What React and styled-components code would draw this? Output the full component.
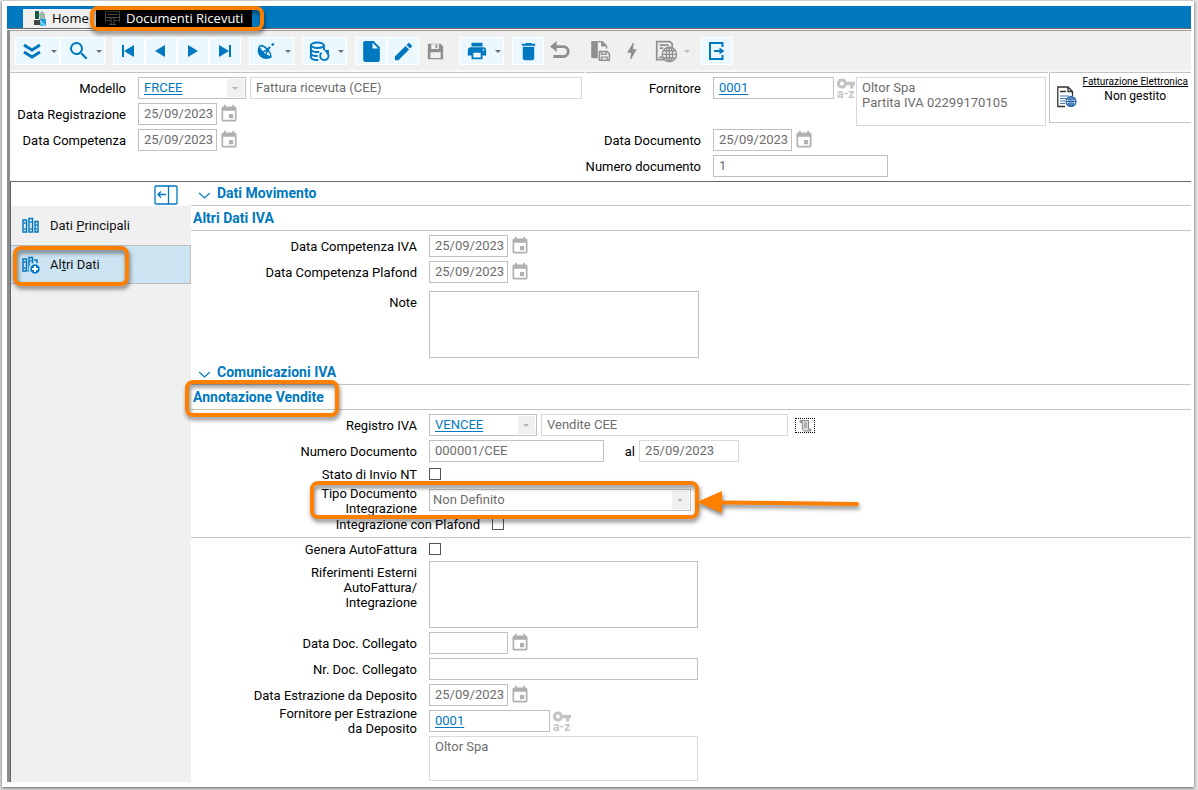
import React, { useState } from "react";
import styled, { createGlobalStyle, css } from "styled-components";
import { MdEvent, MdPrint, MdDelete, MdEdit, MdInsertDriveFile, MdSearch, MdBolt } from "react-icons/md";

const blue = "#0078bf";
const orange = "#ff8000";
const line = "#c3c3c3";

const GlobalStyle = createGlobalStyle`
  *, *::before, *::after { box-sizing: border-box; }
  body { margin: 0; background: #e2e2e2; font: 13px/15px Roboto, "Liberation Sans", sans-serif; color: #000; }
  button, input, select, textarea { font: inherit; color: inherit; margin: 0; }
  button { border: 0; padding: 0; background: none; cursor: pointer; }
  svg { display: block; }
`;

const Page = styled.div`
  min-height: 100vh;
  display: flex;
  padding: 1px 4px 3px 2px;
`;

const Card = styled.div`
  flex: 1;
  min-width: 0;
  display: flex;
  flex-direction: column;
  background: #fff;
  padding: 5px 3px 5px 5px;
  box-shadow: 0 1px 3px rgba(0, 0, 0, 0.6);
`;

const TabBar = styled.nav`
  display: flex;
  height: 23px;
  padding-left: 16px;
  background: ${blue};
  border-bottom: 1px solid #6a6468;
`;

const Tab = styled.button`
  position: relative;
  display: flex;
  align-items: center;
  gap: ${(p) => (p.$active ? "6px" : "5px")};
  height: ${(p) => (p.$active ? "18px" : "19px")};
  margin-top: 3px;
  padding: ${(p) => (p.$active ? "0 8px 0 9px" : "0 4px 0 10px")};
  width: ${(p) => (p.$active ? "156px" : "73px")};
  background: ${(p) => (p.$active ? "#000" : "#f0f0f0")};
  color: ${(p) => (p.$active ? "#fff" : "#000")};
  font-family: "Open Sans", "Noto Sans", sans-serif;
  white-space: nowrap;
`;

const Highlight = styled.span`
  position: absolute;
  z-index: 2;
  left: ${(p) => p.$x}px;
  top: ${(p) => p.$y}px;
  width: ${(p) => p.$w}px;
  height: ${(p) => p.$h}px;
  border: 4px solid ${orange};
  border-radius: 8px;
  filter: drop-shadow(1px 3px 2px rgba(0, 0, 0, 0.5));
  pointer-events: none;
`;

const Arrow = styled.svg`
  position: absolute;
  z-index: 2;
  left: 505px;
  top: 2px;
  filter: drop-shadow(1px 3px 2px rgba(0, 0, 0, 0.5));
  pointer-events: none;
`;

const Workspace = styled.div`
  flex: 1;
  display: flex;
  flex-direction: column;
  margin-top: 1px;
  border-left: 3px solid #8c8c8c;
`;

const Toolbar = styled.div`
  display: flex;
  gap: 8px;
  height: 42px;
  padding: 6px 5px;
  background: #f0f0f0;
  border-top: 1px solid #a09a9c;
  box-shadow: inset 0 -2px 0 #f8f8f8;
`;

const ToolGroup = styled.div`
  display: flex;
`;

const ToolButton = styled.button`
  display: flex;
  align-items: center;
  justify-content: ${(p) => (p.$menu ? "space-between" : "center")};
  width: ${(p) => (p.$menu ? "45px" : "32px")};
  height: 28px;
  padding: ${(p) => (p.$menu ? "0 2px 0 6px" : "0")};
  border: 1px solid ${(p) => (p.$off ? "transparent" : "#fff")};
  background: ${(p) => (p.$off ? "transparent" : "#ebf8ff")};
  color: ${(p) => (p.$off ? "#8f8f8f" : blue)};
`;

const Caret = styled.span`
  border: 3px solid transparent;
  border-top-color: ${(p) => (p.$off ? "#b8b8b8" : "#6f6f6f")};
  border-bottom: 0;
`;

const Header = styled.div`
  display: flex;
  align-items: flex-start;
  gap: 1px;
`;

const HeaderPane = styled.div`
  display: flex;
  flex-direction: column;
  gap: 4px;
  padding: 4px 2px 4px 0;
  border-top: 1px solid ${line};
  flex: ${(p) => (p.$grow ? "1 1 0" : "0 0 463px")};
  min-width: 0;
`;

const Invoice = styled.div`
  flex: 0 0 142px;
  display: flex;
  align-items: flex-start;
  justify-content: space-between;
  height: 51px;
  padding: 1px 3px 0 7px;
  border: 1px solid ${line};
  border-right: 0;
  > svg { margin-top: 12px; }
`;

const InvoiceText = styled.div`
  text-align: center;
  font-size: 12px;
  a { display: block; font-size: 10px; color: #000; }
`;

const Row = styled.div`
  position: relative;
  display: flex;
  align-items: ${(p) => (p.$top ? "flex-start" : "center")};
  height: ${(p) => p.$h || 22}px;
  margin-top: ${(p) => p.$space || 0}px;
`;

const Label = styled.label`
  flex: none;
  width: ${(p) => p.$w || 226}px;
  margin-right: ${(p) => (p.$w === 31 ? 4 : 12)}px;
  padding-top: ${(p) => p.$pad || 0}px;
  text-align: right;
  white-space: pre-line;
`;

const box = css`
  flex: ${(p) => (p.$w ? "none" : "1")};
  width: ${(p) => (p.$w ? p.$w + "px" : "auto")};
  min-width: 0;
  height: ${(p) => p.$h || 22}px;
  padding: 0 2px 0 5px;
  margin-left: ${(p) => p.$gap || 0}px;
  border: 1px solid ${(p) => (p.$soft ? "#d9d9d9" : "#c0c0c0")};
  border-radius: 0;
  background: #fff;
  color: ${(p) => (p.$link ? blue : "#6d6d6d")};
  text-decoration: ${(p) => (p.$link ? "underline" : "none")};
  text-underline-offset: 2px;
  outline: 0;
`;

const Input = styled.input`
  ${box}
  padding-bottom: 1px;
`;

const Area = styled.textarea`
  ${box}
  display: block;
  padding-top: 2px;
  resize: none;
`;

const SelectWrap = styled.span`
  position: relative;
  flex: none;
  display: flex;
  width: ${(p) => p.$w}px;
  &::before {
    content: "";
    position: absolute;
    right: 2px;
    top: 2px;
    width: 17px;
    height: 18px;
    background: #f0f0f0;
    pointer-events: none;
  }
  &::after {
    content: "";
    position: absolute;
    right: 8px;
    top: 10px;
    border: 3px solid transparent;
    border-top-color: #b5b5b5;
    border-bottom: 0;
    pointer-events: none;
  }
`;

const SelectBox = styled.select`
  ${box}
  appearance: none;
  padding: 0 20px 1px ${(p) => (p.$link ? 5 : 3)}px;
`;

const SelectSlot = styled.div`
  display: flex;
  padding-top: 3px;
`;

const Check = styled.input.attrs({ type: "checkbox" })`
  appearance: none;
  width: 12px;
  height: 12px;
  border: 1px solid #555;
  background: #fff;
  &:checked { background: ${blue}; }
`;

const IconButton = styled.button`
  flex: none;
  width: 20px;
  height: 20px;
  margin-left: 2px;
  color: #b0b0b0;
`;

const KeyButton = styled.button`
  flex: none;
  width: 22px;
  height: 22px;
  padding-left: 3px;
  color: #c4c4c4;
  font-size: 12px;
  font-weight: 700;
  line-height: 10px;
  text-align: left;
`;

const ScrollButton = styled.button`
  width: 20px;
  height: 15px;
  margin-left: 7px;
  border: 1px dotted #000;
  display: flex;
  justify-content: center;
  align-items: center;
`;

const Body = styled.div`
  flex: 1;
  display: flex;
  border-top: 1px solid #666;
  border-left: 1px solid #666;
`;

const Sidebar = styled.aside`
  flex: 0 0 180px;
  background: #f0f0f0;
`;

const SidebarTop = styled.div`
  display: flex;
  justify-content: flex-end;
  height: 24px;
  padding: 2px 13px 0 0;
  background: #fff;
`;

const SideItem = styled.button`
  position: relative;
  display: flex;
  align-items: center;
  gap: 9px;
  width: 100%;
  height: 39px;
  padding-left: 10px;
  border: 1px solid ${(p) => (p.$active ? "#bdbdbd" : "transparent")};
  border-left: 0;
  background: ${(p) => (p.$active ? "#cce3f1" : "transparent")};
  color: ${blue};
  span { color: #111; }
`;

const Main = styled.main`
  flex: 1;
  min-width: 0;
`;

const SectionTitle = styled.h2`
  display: flex;
  align-items: center;
  gap: 7px;
  height: 24px;
  margin: 0;
  padding-left: 8px;
  border-bottom: 1px solid ${line};
  font-size: 14px;
  font-weight: 700;
  color: ${blue};
  svg { margin-top: 3px; }
`;

const SubTitle = styled.h3`
  position: relative;
  height: 25px;
  margin: 0;
  padding: 5px 2px;
  border-bottom: 1px solid ${line};
  font-size: 14px;
  font-weight: 700;
  color: ${blue};
`;

const Form = styled.div`
  display: flex;
  flex-direction: column;
  gap: 4px;
  padding: ${(p) => p.$top || 4}px 0 ${(p) => p.$bottom || 4}px;
  border-bottom: ${(p) => (p.$ruled ? `1px solid ${line}` : "0")};
`;

const Icon = ({ size = 20, children, ...rest }) => (
  <svg width={size} height={size} viewBox="0 0 20 20" fill="none" stroke="currentColor" strokeWidth="2" aria-hidden="true" {...rest}>
    {children}
  </svg>
);

const fill = { fill: "currentColor", stroke: "none" };

const Globe = ({ x, y, r, back = "#f0f0f0", w = 1 }) => (
  <g strokeWidth={w}>
    <circle cx={x} cy={y} r={r} fill={back} />
    <ellipse cx={x} cy={y} rx={r * 0.45} ry={r} />
    <path d={`M${x - r} ${y}h${r * 2}M${x} ${y - r}v${r * 2}M${x - r * 0.85} ${y - r / 2}h${r * 1.7}M${x - r * 0.85} ${y + r / 2}h${r * 1.7}`} />
  </g>
);

const icons = {
  down: <Icon><path d="M2 4l8 5 8-5M2 11l8 5 8-5" strokeWidth="3" /></Icon>,
  search: <MdSearch size={24} />,
  first: <Icon><path d="M4 4v12" /><path d="M15 4v12L5 10z" {...fill} /></Icon>,
  prev: <Icon><path d="M14 4v12L4 10z" {...fill} /></Icon>,
  next: <Icon><path d="M5 4v12l10-6z" {...fill} /></Icon>,
  last: <Icon><path d="M15 4v12" /><path d="M4 4v12l10-6z" {...fill} /></Icon>,
  dish: (
    <Icon>
      <path d="M3.500 4.500C1 7.500 1 12.500 4.500 15.700c3.300 3 8.300 2.800 11.500.3l-2-1.200C9 14 5 9 3.500 4.500z" {...fill} />
      <path d="M3.500 5c2-1 5 .5 7.500 3s4.500 6 3.500 8.500M6 11.500l5-2.500M9 15l2.500-5" strokeWidth="1.500" />
      <circle cx="11.500" cy="9" r="1.800" {...fill} />
      <path d="M12 8l7-6.500" strokeDasharray="3 2" />
    </Icon>
  ),
  database: (
    <Icon size={21} strokeWidth="1.800">
      <ellipse cx="8" cy="4" rx="6.200" ry="2.600" />
      <path d="M1.800 4v11.500c0 1.800 3 2.800 7 2.600M14.200 4v4.500M1.800 8c.5 2 4 3 8 2.300M1.800 12c.8 1.700 3.500 2.500 6.500 2.200" />
      <path d="M12 11.200a4 4 0 1 0 5-.2" /><path d="M14 8.500h5v5z" {...fill} />
    </Icon>
  ),
  file: <MdInsertDriveFile size={25} />,
  edit: <MdEdit size={23} />,
  save: (
    <Icon size={17}>
      <path d="M2 1h14l3 3v15H1V1z" stroke="none" fill="currentColor" />
      <path d="M5 1.500h9v5.500H5zM4 11h12v6.500H4z" stroke="none" fill="#f0f0f0" />
      <path d="M11 2v4" />
    </Icon>
  ),
  print: <MdPrint size={22} />,
  trash: <MdDelete size={23} />,
  undo: <Icon size={22}><path d="M5 6h8a4.500 4.500 0 0 1 0 9H4" strokeWidth="2.600" /><path d="M1 6l6-5v10z" {...fill} /></Icon>,
  copySave: (
    <Icon size={22}>
      <path d="M2 1h6v15H2z" {...fill} /><path d="M8 1.500h4l4 4V8M8 16H3" strokeWidth="1.200" /><path d="M11 1v5h5z" {...fill} />
      <path d="M9.500 10.500h7l2 2v6h-9z" fill="#f0f0f0" strokeWidth="1.400" /><path d="M11.500 10.500v2.500h4v-2.500M11.500 18v-2.500h5V18" strokeWidth="1.200" />
    </Icon>
  ),
  bolt: <MdBolt size={22} />,
  globe: (
    <Icon size={23} strokeWidth="1.500">
      <path d="M1.500 1.500h11.500l2 2V17H1.500zM4 4.500h8M4 7h3M3.500 15h3" /><Globe x={12.5} y={12.5} r={6.2} w={1.2} />
    </Icon>
  ),
  exit: <Icon><path d="M15.500 6V2H3v16h12.500v-4M7 10h7" /><path d="M12.500 6.500l5 3.500-5 3.500z" {...fill} /></Icon>,
};

const toolGroups = [
  [["down", "Azioni", 1], ["search", "Cerca", 1]],
  [["first", "Primo"], ["prev", "Precedente"], ["next", "Successivo"], ["last", "Ultimo"]],
  [["dish", "Collegamenti", 1]],
  [["database", "Aggiorna dati", 1]],
  [["file", "Nuovo"], ["edit", "Modifica"], ["save", "Salva", 0, 1]],
  [["print", "Stampa", 1]],
  [["trash", "Elimina"], ["undo", "Annulla", 0, 1]],
  [["copySave", "Duplica", 0, 1], ["bolt", "Esegui", 0, 1], ["globe", "Documento web", 1, 1]],
  [["exit", "Esci"]],
];

const DateRow = ({ id, label, w, value = "25/09/2023" }) => (
  <Row>
    <Label htmlFor={id} $w={w}>{label}</Label>
    <Input id={id} $w={79} defaultValue={value} />
    <IconButton aria-label={`Calendario ${label}`}><MdEvent size={20} /></IconButton>
  </Row>
);

const Combo = ({ id, w, value, link }) => (
  <SelectWrap $w={w}>
    <SelectBox id={id} $link={link} defaultValue={value}>
      <option>{value}</option>
    </SelectBox>
  </SelectWrap>
);

const Lookup = () => (
  <KeyButton aria-label="Ricerca fornitore">
    <svg width="18" height="11" viewBox="1 6 22 12" fill="currentColor">
      <path d="M12.650 10A6 6 0 0 0 7 6a6 6 0 1 0 5.650 8H17v4h4v-4h2v-4H12.650zM7 14.500a2.500 2.500 0 1 1 0-5 2.500 2.500 0 0 1 0 5z" />
    </svg>
    a-z
  </KeyButton>
);

const CheckRow = ({ id, label, w }) => (
  <Row $h={16}>
    <Label htmlFor={id} $w={w}>{label}</Label>
    <Check id={id} />
  </Row>
);

const Chevron = () => (
  <svg width="11" height="7" viewBox="0 0 11 7" fill="none" stroke={blue} strokeWidth="1.200" aria-hidden="true"><path d="M0 1l5.500 5L11 1" /></svg>
);

const Binders = ({ plus }) => (
  <Icon strokeWidth="1.500">
    <path d="M2 4h3.500v12H2zM3 7h1.500M3 13h1.500M8 2.500h3.500V16H8zM9 6h1.500M9 13h1.500" />
    {plus ? (
      <>
        <path d="M13 5h3v3" />
        <circle cx="14" cy="14" r="5.500" fill="currentColor" stroke="#cce3f1" />
        <path d="M14 11v6M11 14h6" stroke="#fff" strokeWidth="2" />
      </>
    ) : (
      <path d="M14 5.500h3V16h-3zM15 9h1M15 13h1" />
    )}
  </Icon>
);

export default function App() {
  const [page, setPage] = useState("altri");
  return (
    <Page>
      <GlobalStyle />
      <Card>
        <TabBar>
          <Tab>
            <svg width="14" height="16" viewBox="0 0 14 16" aria-hidden="true">
              <path d="M2 0h4v8H2z" fill="#155c42" /><path d="M6 3l3-3 3 3v5H7z" fill="#9bb8ac" />
              <path d="M1 9h6v5H1z" fill="#444" /><path d="M6 8l7 7V8z" fill="#1e9fd8" /><path d="M7 10v5h5z" fill="#36c4ee" />
            </svg>
            Home
          </Tab>
          <Tab $active>
            <svg width="15" height="15" viewBox="0 0 15 15" fill="none" stroke="#4d4d4d" aria-hidden="true">
              <path d="M0 .5h15M2 3.500h11M0 6.500h15M.5 0v11M14.500 0v11M6 7v6M9 7v6M4 13.500h7M2 9.500h3M10 9.500h3" />
            </svg>
            Documenti Ricevuti
            <Highlight $x={-6} $y={-3} $w={174} $h={25} />
          </Tab>
        </TabBar>

        <Workspace>
          <Toolbar role="toolbar" aria-label="Comandi">
            {toolGroups.map((group) => (
              <ToolGroup key={group[0][0]}>
                {group.map(([name, title, menu, off]) => (
                  <ToolButton key={name} aria-label={title} $menu={!!menu} $off={!!off}>
                    {icons[name]}
                    {menu ? <Caret $off={!!off} /> : null}
                  </ToolButton>
                ))}
              </ToolGroup>
            ))}
          </Toolbar>

          <Header>
            <HeaderPane $grow>
              <Row>
                <Label htmlFor="modello" $w={116}>Modello</Label>
                <Combo id="modello" w={108} value="FRCEE" link />
                <Input $soft $gap={4} aria-label="Descrizione modello" defaultValue="Fattura ricevuta (CEE)" />
              </Row>
              <DateRow id="registrazione" label="Data Registrazione" w={116} />
              <DateRow id="competenza" label="Data Competenza" w={116} />
            </HeaderPane>
            <HeaderPane>
              <Row $top $h={48}>
                <Label htmlFor="fornitore" $w={116} $pad={4}>Fornitore</Label>
                <Input id="fornitore" $w={121} $link defaultValue="0001" />
                <Lookup />
                <Area $soft $h={49} aria-label="Dettagli fornitore" defaultValue={"Oltor Spa\nPartita IVA 02299170105"} />
              </Row>
              <DateRow id="documento" label="Data Documento" w={116} />
              <Row>
                <Label htmlFor="numero" $w={116}>Numero documento</Label>
                <Input id="numero" $w={175} defaultValue="1" />
              </Row>
            </HeaderPane>
            <Invoice>
              <svg width="20" height="22" viewBox="0 0 20 22" fill="none" stroke="#333" aria-hidden="true">
                <path d="M8 20.500H.8V1H11l4.500 4.500V10M11 1v4.500h4.500M3 5.500h6" strokeWidth="1.300" />
                <path d="M3 10h9M3 12.500h6M3 15h5M3 17.500h5" stroke="#3f78b8" strokeWidth="1.200" />
                <g stroke="#2563a8"><Globe x={14} y={15.5} r={5} back="#fff" w={1.2} /></g>
              </svg>
              <InvoiceText>
                <a href="#fatturazione">Fatturazione Elettronica</a>
                Non gestito
              </InvoiceText>
            </Invoice>
          </Header>

          <Body>
            <Sidebar>
              <SidebarTop>
                <button aria-label="Comprimi menu">
                  <svg width="24" height="20" viewBox="0 0 24 20" fill="none" stroke={blue}>
                    <rect x="1" y="1" width="22" height="18" rx="1" strokeWidth="1.300" /><path d="M14.500 1v18M4 9.500h8M7 6.500l-3 3 3 3" strokeWidth="1.300" />
                  </svg>
                </button>
              </SidebarTop>
              <SideItem $active={page === "principali"} onClick={() => setPage("principali")}>
                <Binders />
                <span>Dati <u>P</u>rincipali</span>
              </SideItem>
              <SideItem $active={page === "altri"} onClick={() => setPage("altri")}>
                <Binders plus />
                <span>Al<u>t</u>ri Dati</span>
                <Highlight $x={2} $y={0} $w={116} $h={40} />
              </SideItem>
            </Sidebar>

            <Main>
              <SectionTitle><Chevron />Dati Movimento</SectionTitle>
              <SubTitle>Altri Dati IVA</SubTitle>
              <Form $bottom={3}>
                <DateRow id="compIva" label="Data Competenza IVA" />
                <DateRow id="compPlafond" label="Data Competenza Plafond" />
                <Row $top $h={67} $space={4}>
                  <Label htmlFor="note" $pad={4}>Note</Label>
                  <Area id="note" $w={270} $h={67} />
                </Row>
              </Form>

              <SectionTitle><Chevron />Comunicazioni IVA</SectionTitle>
              <SubTitle>
                Annotazione Vendite
                <Highlight $x={-6} $y={-5} $w={154} $h={37} />
              </SubTitle>
              <Form $ruled $bottom={5}>
                <Row>
                  <Label htmlFor="registro">Registro IVA</Label>
                  <Combo id="registro" w={108} value="VENCEE" link />
                  <Input $soft $w={247} $gap={4} aria-label="Descrizione registro" defaultValue="Vendite CEE" />
                  <ScrollButton aria-label="Dettaglio registro">
                    <svg width="13" height="13" viewBox="0 0 13 13" fill="#ddd" stroke="#888" aria-hidden="true">
                      <path d="M3 1.500h6.500v9H12v1.500H5L3.500 10.500zM1 1.500h2v2H1zM5 4h3M5 6h3M5 8h3" />
                    </svg>
                  </ScrollButton>
                </Row>
                <Row>
                  <Label htmlFor="numDoc">Numero Documento</Label>
                  <Input id="numDoc" $w={175} defaultValue="000001/CEE" />
                  <Label htmlFor="al" $w={31}>al</Label>
                  <Input id="al" $w={100} $soft defaultValue="25/09/2023" />
                </Row>
                <CheckRow id="stato" label="Stato di Invio NT" />
                <Row $h={26} $top>
                  <Label htmlFor="tipo">{"Tipo Documento\nIntegrazione"}</Label>
                  <SelectSlot>
                    <Combo id="tipo" w={262} value="Non Definito" />
                  </SelectSlot>
                  <Highlight $x={119} $y={-5} $w={389} $h={38} />
                  <Arrow width="166" height="26" viewBox="0 0 166 26" aria-hidden="true">
                    <path d="M24 14.500L161 16" stroke={orange} strokeWidth="4" strokeLinecap="round" />
                    <path d="M1 14L26 3v22z" fill={orange} />
                  </Arrow>
                </Row>
                <CheckRow id="plafond" label="Integrazione con Plafond" w={289} />
              </Form>

              <Form $top={3} $bottom={1}>
                <CheckRow id="genera" label="Genera AutoFattura" />
                <Row $top $h={67}>
                  <Label htmlFor="riferimenti" $pad={4}>{"Riferimenti Esterni\nAutoFattura/\nIntegrazione"}</Label>
                  <Area id="riferimenti" $w={269} $h={67} />
                </Row>
                <DateRow id="dataColl" label="Data Doc. Collegato" value="" />
                <Row>
                  <Label htmlFor="nrColl">Nr. Doc. Collegato</Label>
                  <Input id="nrColl" $w={269} />
                </Row>
                <DateRow id="estrazione" label="Data Estrazione da Deposito" />
                <Row>
                  <Label htmlFor="fornEstr">{"Fornitore per Estrazione\nda Deposito"}</Label>
                  <Input id="fornEstr" $w={121} $link defaultValue="0001" />
                  <Lookup />
                </Row>
                <Row $top $h={45}>
                  <Label htmlFor="nomeForn" />
                  <Area id="nomeForn" aria-label="Nome fornitore" $w={269} $h={45} $soft defaultValue="Oltor Spa" />
                </Row>
              </Form>
            </Main>
          </Body>
        </Workspace>
      </Card>
    </Page>
  );
}
